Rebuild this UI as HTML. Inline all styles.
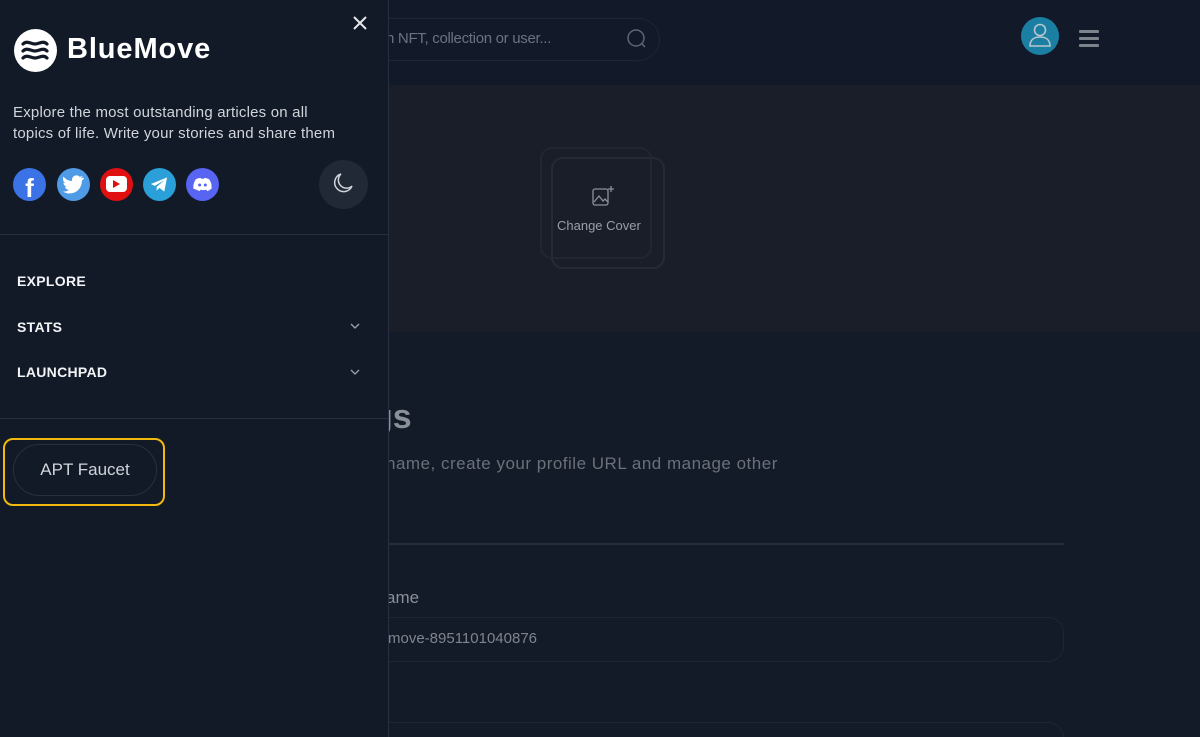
<!DOCTYPE html>
<html><head><style>
*{margin:0;padding:0;box-sizing:border-box}
html,body{width:1200px;height:737px;overflow:hidden}
body{background:#131a28;font-family:"Liberation Sans",sans-serif;position:relative}
.abs{position:absolute}
</style></head><body>
<div class="abs" style="left:0;top:0;width:1200px;height:85px;background:#121929"></div>
<div class="abs" style="left:340px;top:18px;width:320px;height:43px;border:1px solid #1e2636;border-radius:22px"></div>
<div class="abs" style="left:386px;top:30px;color:#6b7280;font-size:15px;letter-spacing:-0.3px">h NFT, collection or user...</div>
<svg class="abs" style="left:626px;top:28px" width="22" height="22" viewBox="0 0 22 22"><circle cx="10" cy="10" r="8" fill="none" stroke="#5f6673" stroke-width="1.5"/><path d="M16 16l3 3" stroke="#5f6673" stroke-width="1.5"/></svg>
<div class="abs" style="left:1021px;top:17px;width:38px;height:38px;border-radius:50%;background:#1a7fa2"></div>
<svg class="abs" style="left:1021px;top:17px" width="38" height="38" viewBox="0 0 38 38"><circle cx="19" cy="13" r="5.5" fill="none" stroke="#b8c6cf" stroke-width="1.6"/><path d="M9 29c0-6 4-9 10-9s10 3 10 9z" fill="none" stroke="#b8c6cf" stroke-width="1.6"/></svg>
<div class="abs" style="left:1079px;top:30px;width:20px;height:3px;background:#7d828b;border-radius:1px;box-shadow:0 7px 0 #7d828b,0 14px 0 #7d828b"></div>
<div class="abs" style="left:389px;top:85px;width:811px;height:247px;background:#1a1e29"></div>
<div class="abs" style="left:540px;top:147px;width:112px;height:112px;border:2px solid #22262f;border-radius:12px"></div>
<div class="abs" style="left:551px;top:157px;width:114px;height:112px;border:2px solid #252a35;border-radius:12px"></div>
<svg class="abs" style="left:591px;top:184px" width="26" height="26" viewBox="0 0 26 26"><rect x="2" y="5" width="15" height="16" rx="2" fill="none" stroke="#8c9099" stroke-width="1.3"/><path d="M3 18l5-6 4 5 2-2 3 3M20 2v6M17 5h6" fill="none" stroke="#8c9099" stroke-width="1.3"/></svg>
<div class="abs" style="left:557px;top:218px;color:#9a9ea6;font-size:13px">Change Cover</div>
<div class="abs" style="left:372px;top:398px;color:#8b8f98;font-size:34px;font-weight:bold">gs</div>
<div class="abs" style="left:386px;top:454px;color:#6b7079;font-size:17px;letter-spacing:0.5px">name, create your profile URL and manage other</div>
<div class="abs" style="left:389px;top:543px;width:675px;height:2px;background:#262c38"></div>
<div class="abs" style="left:386px;top:588px;color:#8b8f98;font-size:17px">ame</div>
<div class="abs" style="left:340px;top:617px;width:724px;height:45px;border:1px solid #1e2535;border-radius:16px"></div>
<div class="abs" style="left:388px;top:630px;color:#80848d;font-size:15px">move-8951101040876</div>
<div class="abs" style="left:340px;top:722px;width:724px;height:45px;border:1px solid #1e2535;border-radius:16px"></div>
<!-- sidebar -->
<div class="abs" style="left:0;top:0;width:389px;height:737px;background:#121927;border-right:1px solid #283040"></div>
<svg class="abs" style="left:352px;top:15px" width="16" height="16" viewBox="0 0 16 16"><path d="M2 2l12 12M14 2L2 14" stroke="#e5e7eb" stroke-width="2"/></svg>
<div class="abs" style="left:14px;top:29px;width:43px;height:43px;border-radius:50%;background:#fff"></div>
<svg class="abs" style="left:14px;top:29px" width="43" height="43" viewBox="0 0 43 43"><path d="M9 15c4-4 8 0 12 0s8-4 12 0M9 22c4-4 8 0 12 0s8-4 12 0M9 29c4-4 8 0 12 0s8-4 12 0" fill="none" stroke="#121927" stroke-width="3.2" stroke-linecap="round"/></svg>
<div class="abs" style="left:67px;top:33px;color:#fff;font-size:29px;font-weight:bold;letter-spacing:0.9px">BlueMove</div>
<div class="abs" style="left:13px;top:102px;color:#d1d5db;font-size:15px;line-height:21px;white-space:nowrap;letter-spacing:0.2px">Explore the most outstanding articles on all<br>topics of life. Write your stories and share them</div>
<div class="abs" style="left:13px;top:168px;width:33px;height:33px;border-radius:50%;background:#3b73e6;color:#fff;font-weight:bold;font-size:26px;text-align:center;line-height:40px;overflow:hidden">f</div>
<div class="abs" style="left:57px;top:168px;width:33px;height:33px;border-radius:50%;background:#4f9be6"></div>
<svg class="abs" style="left:63px;top:175px" width="21" height="19" viewBox="0 0 24 20"><path d="M23 2c-1 .5-2 .7-3 .8 1-.6 2-1.6 2.3-2.8-1 .6-2 1-3.2 1.3A5 5 0 0 0 10.5 6C6.4 5.8 2.8 3.9.5 1 -1 4 .5 7 2.7 8.3c-.8 0-1.6-.3-2.2-.6 0 2.4 1.7 4.4 4 4.9-.7.2-1.5.2-2.2.1.6 2 2.5 3.4 4.6 3.4A10 10 0 0 1 0 18a14 14 0 0 0 21.6-12.5c1-.7 1.8-1.6 2.4-2.6z" fill="#fff"/></svg>
<div class="abs" style="left:100px;top:168px;width:33px;height:33px;border-radius:50%;background:#e01010"></div>
<div class="abs" style="left:106px;top:176px;width:21px;height:16px;border-radius:4px;background:#fff"></div>
<svg class="abs" style="left:113px;top:180px" width="8" height="8"><path d="M0 0l7 4-7 4z" fill="#e01010"/></svg>
<div class="abs" style="left:143px;top:168px;width:33px;height:33px;border-radius:50%;background:#2a9fd8"></div>
<svg class="abs" style="left:150px;top:176px" width="19" height="17" viewBox="0 0 20 17"><path d="M1 8L18 1l-3 15-5-4-3 3v-4l8-7-10 6z" fill="#fff"/></svg>
<div class="abs" style="left:186px;top:168px;width:33px;height:33px;border-radius:50%;background:#5865f2"></div>
<svg class="abs" style="left:193px;top:177px" width="19" height="15" viewBox="0 0 20 15"><path d="M3 2c2-1 4-1.5 5-1.5l.5 1h3l.5-1c1 0 3 .5 5 1.5 2 3 3 6 2.5 10-1.5 1-3 2-4.5 2.5l-1-1.5c-2 .5-4 .5-6 0l-1 1.5C5.5 14 4 13 .5 12 0 8 1 5 3 2z" fill="#fff"/><circle cx="7" cy="8" r="1.6" fill="#5865f2"/><circle cx="13" cy="8" r="1.6" fill="#5865f2"/></svg>
<div class="abs" style="left:319px;top:160px;width:49px;height:49px;border-radius:50%;background:#212937"></div>
<svg class="abs" style="left:331px;top:172px" width="24" height="24" viewBox="0 0 24 24"><path d="M10 2a9 9 0 1 0 11 12A8 8 0 0 1 10 2z" fill="none" stroke="#d1d5db" stroke-width="1.5"/></svg>
<div class="abs" style="left:0;top:234px;width:389px;height:1px;background:#283040"></div>
<div class="abs" style="left:17px;top:273px;color:#f3f4f6;font-size:14px;font-weight:bold;letter-spacing:0.3px">EXPLORE</div>
<div class="abs" style="left:17px;top:319px;color:#f3f4f6;font-size:14px;font-weight:bold;letter-spacing:0.3px">STATS</div>
<div class="abs" style="left:17px;top:364px;color:#f3f4f6;font-size:14px;font-weight:bold;letter-spacing:0.3px">LAUNCHPAD</div>
<svg class="abs" style="left:350px;top:323px" width="10" height="6"><path d="M1 1l4 4 4-4" fill="none" stroke="#9ca3af" stroke-width="1.3"/></svg>
<svg class="abs" style="left:350px;top:369px" width="10" height="6"><path d="M1 1l4 4 4-4" fill="none" stroke="#9ca3af" stroke-width="1.3"/></svg>
<div class="abs" style="left:0;top:418px;width:389px;height:1px;background:#283040"></div>
<div class="abs" style="left:3px;top:438px;width:162px;height:68px;border:2px solid #f2b90d;border-radius:10px"></div>
<div class="abs" style="left:13px;top:444px;width:144px;height:52px;border:1px solid #283040;border-radius:26px;color:#d1d5db;font-size:17px;text-align:center;line-height:50px">APT Faucet</div>
</body></html>
